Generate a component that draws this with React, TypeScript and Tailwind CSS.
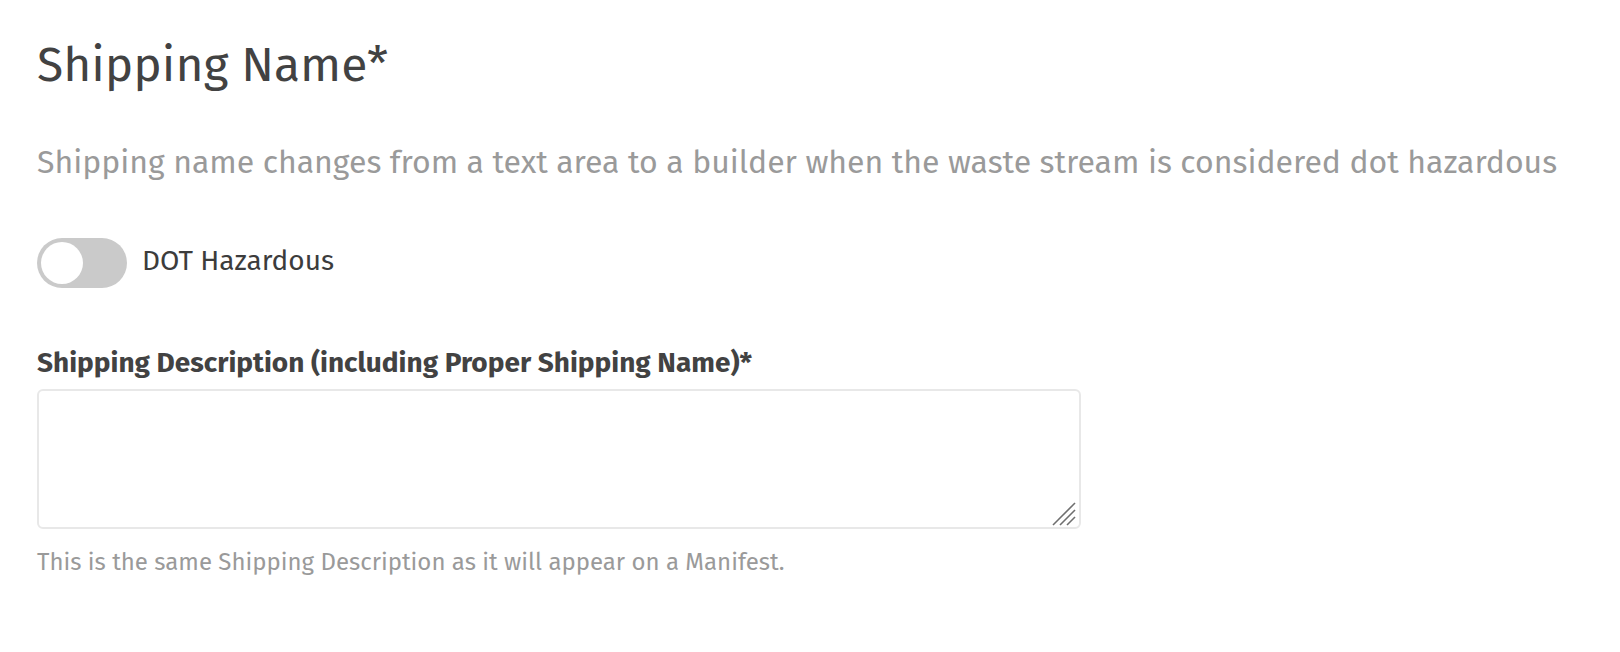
import React from "react";

export default function App() {
  const font = { fontFamily: '"Fira Sans", Roboto, "Open Sans", sans-serif' };
  return (
    <div className="min-h-[652px] w-full bg-white pl-[37px] pt-[37px]" style={font}>
      <h1 className="text-[48px] leading-[56px] font-normal text-[#424242]">Shipping Name*</h1>
      <p className="mt-[49px] text-[32px] leading-[40px] text-[#9a9a9a]">
        Shipping name changes from a text area to a builder when the waste stream is considered dot hazardous
      </p>
      <div className="mt-[56px] flex items-start gap-[15px]">
        <button
          type="button"
          role="switch"
          aria-checked="false"
          className="flex h-[50px] w-[90px] shrink-0 items-center rounded-full bg-[#cacaca] p-[4px]"
        >
          <span className="block h-[42px] w-[42px] rounded-full bg-white" />
        </button>
        <span className="mt-[5px] text-[28px] leading-[36px] text-[#3c3c3c]">DOT Hazardous</span>
      </div>
      <label className="mt-[57px] block text-[28px] font-bold leading-[36px] text-[#424242]">
        Shipping Description (including Proper Shipping Name)*
      </label>
      <div className="relative mt-[8px] h-[140px] w-[1044px]">
        <textarea
          className="block h-full w-full resize-none rounded-[6px] border-2 border-[#e8e8e8] bg-white outline-none"
          aria-label="Shipping Description"
        />
        <svg
          className="pointer-events-none absolute bottom-[3px] right-[5px]"
          width="24"
          height="24"
          viewBox="0 0 24 24"
        >
          <g stroke="#6f6f6f" strokeWidth="1.6" strokeLinecap="butt">
            <line x1="1" y1="23" x2="23" y2="1" />
            <line x1="8" y1="23" x2="23" y2="8" />
            <line x1="15" y1="23" x2="23" y2="15" />
          </g>
        </svg>
      </div>
      <p className="mt-[17px] text-[24px] leading-[32px] text-[#9a9a9a]">
        This is the same Shipping Description as it will appear on a Manifest.
      </p>
    </div>
  );
}
